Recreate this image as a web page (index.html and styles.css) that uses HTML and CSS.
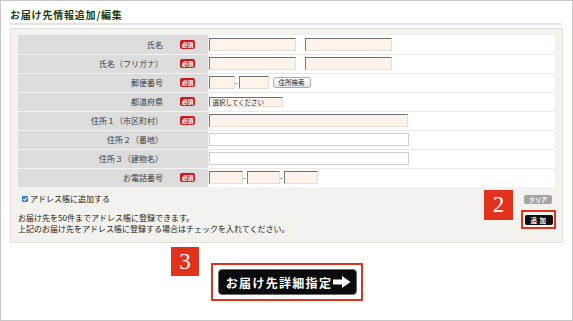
FILE: index.html
```html
<!DOCTYPE html>
<html lang="ja">
<head>
<meta charset="utf-8">
<link rel="stylesheet" href="styles.css">
</head>
<body>
<div class="frame">
  <h1 class="title">お届け先情報追加/編集</h1>
  <div class="panel">
    <table class="form">
      <colgroup><col class="c-label"><col class="c-req"><col></colgroup>
      <tr>
        <th class="label">氏名</th>
        <td class="req"><span class="badge">必須</span></td>
        <td class="field"><div class="f"><span class="in w87"></span><span class="in w87 ml9"></span></div></td>
      </tr>
      <tr>
        <th class="label">氏名（フリガナ）</th>
        <td class="req"><span class="badge">必須</span></td>
        <td class="field"><div class="f"><span class="in w87"></span><span class="in w87 ml9"></span></div></td>
      </tr>
      <tr>
        <th class="label">郵便番号</th>
        <td class="req"><span class="badge">必須</span></td>
        <td class="field"><div class="f"><span class="in w26"></span><span class="dash">-</span><span class="in w30"></span><button class="search" type="button">住所検索</button></div></td>
      </tr>
      <tr>
        <th class="label">都道府県</th>
        <td class="req"><span class="badge">必須</span></td>
        <td class="field"><div class="f"><span class="sel">選択してください</span></div></td>
      </tr>
      <tr>
        <th class="label">住所１（市区町村）</th>
        <td class="req"><span class="badge">必須</span></td>
        <td class="field"><div class="f"><span class="in w199"></span></div></td>
      </tr>
      <tr>
        <th class="label">住所２（番地）</th>
        <td class="req"></td>
        <td class="field"><div class="f"><span class="in plain w200"></span></div></td>
      </tr>
      <tr>
        <th class="label">住所３（建物名）</th>
        <td class="req"></td>
        <td class="field"><div class="f"><span class="in plain w200"></span></div></td>
      </tr>
      <tr>
        <th class="label">お電話番号</th>
        <td class="req"><span class="badge">必須</span></td>
        <td class="field"><div class="f"><span class="in w34"></span><span class="dash">-</span><span class="in w33"></span><span class="dash">-</span><span class="in w34"></span></div></td>
      </tr>
    </table>
    <div class="bottom">
      <div class="notes">
        <div class="check"><span class="box"><svg viewBox="0 0 6 6" width="6" height="6"><path d="M1.2 3.1 L2.5 4.4 L4.9 1.5" fill="none" stroke="#fff" stroke-width="1.1"/></svg></span>アドレス帳に追加する</div>
        <p class="note">お届け先を50件までアドレス帳に登録できます。<br>上記のお届け先をアドレス帳に登録する場合はチェックを入れてください。</p>
      </div>
      <div class="actions">
        <button class="btn-clear" type="button">クリア</button>
        <div class="hl-add"><button class="btn-add" type="button">追 加</button></div>
      </div>
    </div>
  </div>
  <div class="next">
    <div class="hl-next">
      <button class="btn-next" type="button">お届け先詳細指定<svg viewBox="0 0 18 12" width="18" height="12"><path d="M0 3.5 H9 V0 L17.5 6 L9 12 V8.5 H0 Z" fill="#fff"/></svg></button>
    </div>
  </div>
  <span class="marker m2">2</span>
  <span class="marker m3">3</span>
</div>
</body>
</html>
```

FILE: styles.css
```css
* { box-sizing: border-box; }
html, body { margin: 0; padding: 0; background: #fff; }
body { font-family: "Noto Sans CJK JP", "Noto Sans", sans-serif; color: #333; }

.frame {
  position: relative;
  width: 573px;
  height: 321px;
  border: 1px solid #c9c9c9;
  padding: 8px 9px 0 9px;
  overflow: hidden;
}

.title {
  margin: 0 1px 0 0;
  font-size: 10px;
  line-height: 12px;
  font-weight: bold;
  letter-spacing: 0.8px;
  color: #173d0f;
  padding-bottom: 2px;
  border-bottom: 2px solid #e3e3e3;
}

.panel {
  margin-top: 3px;
  background: #f3f2ee;
  border: 1px solid #e3e1db;
  padding: 6px 6px 8px 7px;
}

.form {
  width: 538px;
  table-layout: fixed;
  border-collapse: collapse;
  background: #fff;
}
.c-label { width: 152px; }
.c-req { width: 38px; }

.form th, .form td {
  height: 19px;
  padding: 0;
  vertical-align: middle;
}
.form tr + tr th, .form tr + tr td { border-top: 1px solid #f2f2f2; }
.form tr + tr td.field { border-top-color: #e9e9e9; }

.label {
  background: #dcdcdc;
  text-align: right;
  font-weight: normal;
  font-size: 8px;
  color: #3a3a3a;
  padding-right: 7px !important;
  white-space: nowrap;
}
.req {
  background: #dcdcdc;
  border-right: 1px solid #f4f4f4;
  padding-left: 10px !important;
}
.badge {
  display: block;
  width: 15px;
  height: 9px;
  background: #c9171e;
  border-radius: 2px;
  color: #fff;
  font-size: 6px;
  line-height: 9px;
  text-align: center;
  font-weight: bold;
  letter-spacing: -0.3px;
}
.field { padding-left: 0 !important; border-right: 1px solid #ececec; }

.f { display: flex; align-items: center; }

.in {
  display: block;
  height: 13px;
  background: #fdf3ea;
  border: 1px solid;
  border-color: #6f6f6f #e6dcd2 #e6dcd2 #7a7a7a;
}
.in.plain {
  background: #fff;
  border-color: #cfcfcf;
}
.w87 { width: 87px; }
.ml9 { margin-left: 9px; }
.w26 { width: 26px; }
.w30 { width: 30px; }
.w199 { width: 199px; }
.w200 { width: 200px; }
.w34 { width: 34px; }
.w33 { width: 33px; }

.dash {
  width: 4px;
  text-align: center;
  font-size: 8px;
  line-height: 8px;
  color: #333;
}

.search {
  appearance: none;
  margin: 0 0 0 4px;
  width: 38px;
  height: 11px;
  padding: 0;
  border: 1px solid #a9a9a9;
  border-radius: 3px;
  background: linear-gradient(#ffffff, #e6e6e6);
  font-family: inherit;
  font-size: 6.5px;
  line-height: 9px;
  color: #222;
}

.sel {
  display: block;
  width: 74px;
  height: 10px;
  background: #fdf3ea;
  border: 1px solid;
  border-color: #6f6f6f #e6dcd2 #e6dcd2 #7a7a7a;
  font-size: 6.5px;
  line-height: 8px;
  padding-left: 3px;
  color: #222;
}

.bottom {
  display: flex;
  justify-content: space-between;
  align-items: flex-start;
}

.check {
  margin-top: 6px;
  padding-left: 4px;
  display: flex;
  align-items: center;
  font-size: 8px;
  line-height: 11px;
  color: #1a1a1a;
}
.box {
  width: 6px;
  height: 6px;
  background: #2f7fe0;
  border-radius: 1px;
  margin-right: 2px;
  display: flex;
}
.box svg { display: block; }

.note {
  margin: 8px 0 0 0;
  font-size: 8px;
  line-height: 11px;
  color: #1a1a1a;
}

.actions {
  display: flex;
  flex-direction: column;
  align-items: flex-end;
}
.btn-clear {
  appearance: none;
  margin: 8px 4px 0 0;
  width: 28px;
  height: 9px;
  padding: 0;
  border: none;
  border-radius: 2px;
  background: #a5a5a5;
  color: #fff;
  font-family: inherit;
  font-size: 6px;
  line-height: 9px;
  font-weight: bold;
}
.hl-add {
  margin-top: 6px;
  width: 35px;
  height: 19px;
  border: 2px solid #e2321b;
  display: flex;
  align-items: center;
  justify-content: center;
}
.btn-add {
  appearance: none;
  margin: 0;
  width: 28px;
  height: 10px;
  padding: 0;
  border: none;
  border-radius: 2px;
  background: #0d0d0d;
  color: #fff;
  font-family: inherit;
  font-size: 6.5px;
  line-height: 10px;
  font-weight: bold;
  letter-spacing: 0.5px;
}

.next {
  display: flex;
  justify-content: center;
  margin-top: 20px;
}
.hl-next {
  border: 2px solid #e2321b;
  padding: 4px 4px 4px 5px;
}
.btn-next {
  appearance: none;
  margin: 0;
  width: 139px;
  height: 26px;
  padding: 0 0 0 3px;
  border: 1px solid #6a6a6a;
  border-radius: 4px;
  background: #0b0b0b;
  color: #fff;
  font-family: inherit;
  font-size: 12px;
  font-weight: bold;
  letter-spacing: 1.3px;
  display: flex;
  align-items: center;
  justify-content: center;
  gap: 1px;
}
.btn-next svg { display: block; }

.marker {
  position: absolute;
  background: #e2321b;
  color: #fff;
  font-family: "Liberation Serif", serif;
  font-size: 23px;
  display: flex;
  align-items: center;
  justify-content: center;
}
.m2 { left: 483px; top: 189px; width: 29px; height: 30px; }
.m3 { left: 170px; top: 246px; width: 28px; height: 29px; }
```
